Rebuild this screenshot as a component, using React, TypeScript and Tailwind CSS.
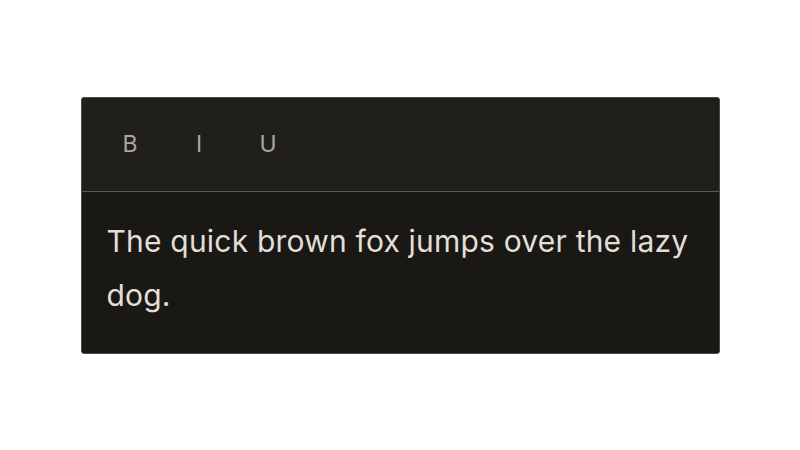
export default function App() {
  return (
    <div className="flex h-[450px] w-[800px] items-center justify-center bg-white" style={{ fontFamily: 'Inter, "Liberation Sans", sans-serif' }}>
      <div className="w-[639px] overflow-hidden rounded-[3px] border border-[#4a4946] bg-[#191814]">
        <div className="flex h-[94px] items-center gap-[44px] border-b border-[#5a5956] bg-[#201f1c] pl-[36px] text-[23px] text-[#a9a69f]">
          <button className="w-[25px] text-center">B</button>
          <button className="w-[25px] text-center">I</button>
          <button className="w-[25px] text-center">U</button>
        </div>
        <div className="px-[25px] pt-[22px] pb-[31px] text-[30px] leading-[54px] tracking-[0.2px] text-[#e2dfd8]">
          The quick brown fox jumps over the lazy dog.
        </div>
      </div>
    </div>
  )
}
